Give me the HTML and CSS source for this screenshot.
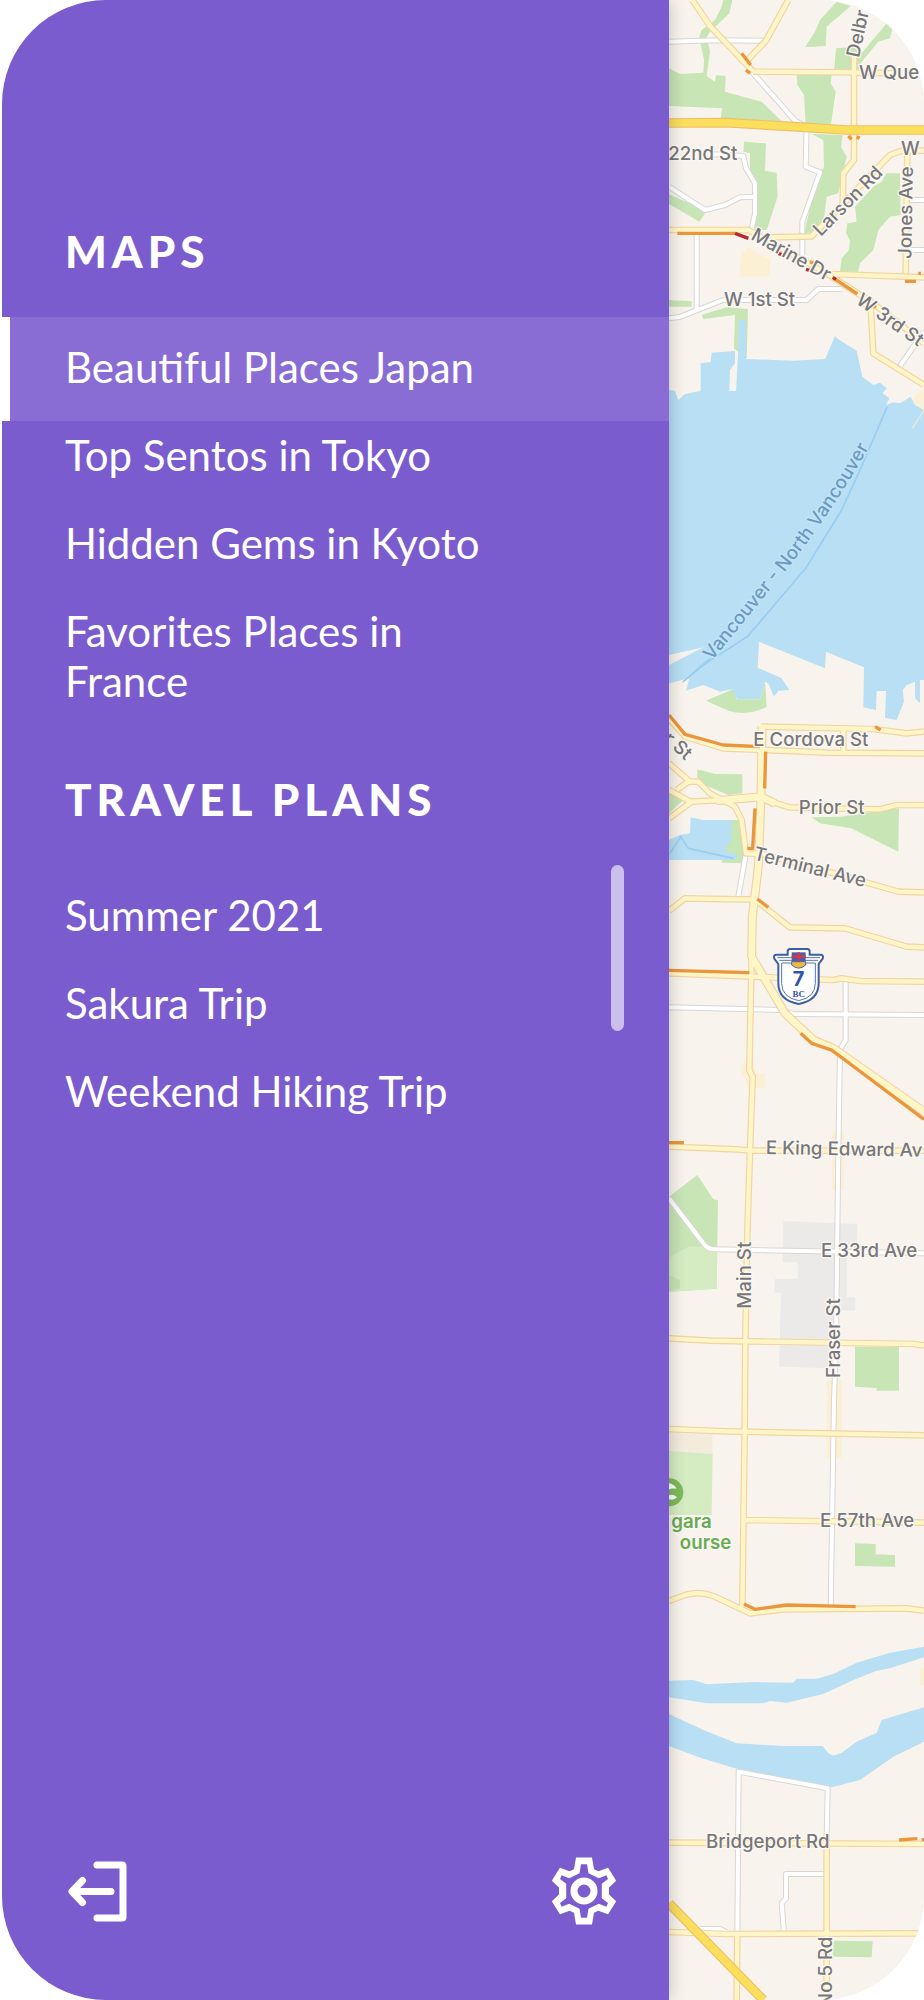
FILE: index.html
```html
<!DOCTYPE html>
<html lang="en">
<head>
<meta charset="utf-8">
<meta name="viewport" content="width=device-width, initial-scale=1">
<title>Travel maps</title>
<link rel="stylesheet" href="styles.css">
</head>
<body>
<div class="app">
  <aside class="sidebar">
    <nav class="menu">
      <section class="menu-section">
        <h2 class="menu-title">MAPS</h2>
        <ul class="menu-list">
          <li><a class="menu-link active" href="#japan" aria-current="page">Beautiful Places Japan</a></li>
          <li><a class="menu-link" href="#tokyo">Top Sentos in Tokyo</a></li>
          <li><a class="menu-link" href="#kyoto">Hidden Gems in Kyoto</a></li>
          <li><a class="menu-link" href="#france">Favorites Places in France</a></li>
        </ul>
      </section>
      <section class="menu-section">
        <h2 class="menu-title">TRAVEL PLANS</h2>
        <div class="scroll-area">
          <ul class="menu-list spaced">
            <li><a class="menu-link" href="#summer">Summer 2021</a></li>
            <li><a class="menu-link" href="#sakura">Sakura Trip</a></li>
            <li><a class="menu-link" href="#hiking">Weekend Hiking Trip</a></li>
          </ul>
          <span class="scroll-thumb"></span>
        </div>
      </section>
    </nav>
    <footer class="actions">
      <button class="icon-button" type="button" aria-label="Log out">
        <svg class="icon" viewBox="-2 -5 68 68" aria-hidden="true">
          <path class="icon-line" d="M29 3H54Q55 3 55 4V55Q55 56 54 56H29M43 29.500H5M14.500 18.500L4 29.500L14.500 40.500"/>
        </svg>
      </button>
      <button class="icon-button" type="button" aria-label="Settings">
        <svg class="icon" viewBox="-34 -34 68 68" aria-hidden="true">
          <path class="icon-solid" d="M-8-33.500H8L10-21.700L14.400-19.700L24.100-23.300L32.200-10.200L25-3.600V3.600L32.200 10.200L24.100 23.300L14.400 19.700L10 21.700L8 33.500H-8L-10 21.700L-14.400 19.700L-24.100 23.300L-32.200 10.200L-25 3.600V-3.600L-32.200-10.200L-24.100-23.300L-14.400-19.700L-10-21.700ZM-3-26.700L-4.500-17.700L-14.800-12.800L-22.400-15.700L-24-12L-17.800-7.300V7.300L-24 12L-22.400 15.700L-14.800 12.800L-4.500 17.700L-3 26.700H3L4.500 17.700L14.800 12.800L22.400 15.700L24 12L17.800 7.300V-7.300L24-12L22.400-15.700L14.800-12.800L4.500-17.700L3-26.700Z"/>
          <circle class="icon-line" r="10"/>
        </svg>
      </button>
    </footer>
  </aside>

  <main class="map">
    <svg class="map-canvas" viewBox="27 0 765 6000" preserveAspectRatio="xMinYMin slice" role="img" aria-label="Map of Vancouver">
      <defs>
        <path id="streets" d="M27 125L170 121L315 122M275 215L405 362L440 380L437 500L480 517L427 665V765M150 462L250 468L258 505L285 550V640L272 700M27 560L135 630L195 615L240 592L282 590M110 705V935M27 955L55 952L190 900H440L475 867H545M792 995L715 1105M745 600H792M740 750H792M258 2560L235 2690M27 3022L360 3030L400 3042L792 3045M557 2940V3120L540 3150L535 3450L528 4030L522 4200L512 4830M27 3595L130 3730Q142 3748 165 3748L792 3760M232 5800L236 5315L503 5365L500 5510M372 5800L365 5710L378 5695V5622H498M120 5787H180L200 5797"/>
        <path id="avenues" d="M97 0L150 78L280 215M385 0L318 122L258 185M280 215L582 217L700 220M582 165V480L550 520L548 625M330 712L455 709L690 465L725 452H792M742 460L737 820M27 690H265L500 820L640 910L792 1030M515 822L792 832M632 920L640 1060L792 1155M792 2260L500 2258L190 2245L75 2210L27 2155M303 2180L640 2187L740 2200L792 2195M550 2190V2255M27 2370L90 2405L300 2395L390 2422L660 2428L710 2415H792M27 2290L90 2345H115L150 2380L225 2420L245 2460L258 2560L310 2562L540 2625L715 2675L792 2677M27 2455L95 2405M50 2370L85 2345M27 2732L75 2695L235 2698H285L390 2782L555 2785L740 2840L792 2842M27 2920L280 2930L520 2940L545 2935L600 2943L792 2945M27 3440L230 3448L270 3452H792M275 2860L268 3210L278 3230L270 3450L262 3700L256 4020L254 4290L247 4820M27 4015L150 4022L760 4032L792 4036M27 4287L200 4294L792 4306M255 4560L792 4568M27 4803L75 4785Q120 4772 160 4788L270 4840L370 4828L740 4825L792 4832M27 5528L792 5532M500 5505V6000M27 5796L200 5802L792 5800M232 5800L230 6000"/>
        <path id="arterials" d="M306 2180L303 2390L295 2600L283 2700L277 2750L275 2870L375 3040L460 3120L520 3145L792 3335M170 2402L303 2390L345 2410"/>
        <path id="highways" d="M27 369L200 368L400 380L560 390H792M27 5710L310 6000"/>
        <path id="ferry-label" d="M155 1984L385 1702Q560 1480 690 1225"/>
      </defs>

      <rect class="land" x="27" y="0" width="765" height="6000"/>

      <g class="sand">
        <path d="M245 760L265 740L330 780L328 830H238Z"/>
        <path d="M792 1170L765 1185L760 1205L792 1230Z"/>
        <path d="M245 3190H285V3220H315V3265H265L255 3232H245ZM515 3395H550V3570H515ZM500 4140H545V4375H500ZM780 5005H792V5055H780Z"/>
      </g>
      <path class="tan" d="M27 4295L157 4300V4362L27 4357Z"/>
      <path class="grey" d="M370 3663L592 3672L590 3758H560V3892H586V3932L520 3930L510 4105L357 4100L363 3878H343L345 3836H413V3787H368Z"/>
      <g class="park">
        <path d="M27 205L60 222L130 218L132 180L118 110L125 90L165 60L185 20L190 0H217L208 40L150 95L140 110L150 155L140 228L165 245L168 226L197 228L195 275L305 305L370 368L182 355L187 325L27 318Z"/>
        <path d="M530 5L572 18L500 80L497 138L435 142L465 95L480 60Z"/>
        <path d="M680 70L697 85L690 115L655 125L605 185L600 210H522L528 145L585 140L605 160Z"/>
        <path d="M410 225H515L512 250L527 275L512 380L437 375L432 285L412 255Z"/>
        <path d="M455 402L548 405L543 440L560 470L535 580L500 590L487 695L432 700L450 625L470 545L492 500L490 420Z"/>
        <path d="M252 425L318 430L315 512L350 518L353 590L320 690H285L290 545L270 515V460L250 455Z"/>
        <path d="M27 583L140 632L118 665L27 612Z"/>
        <path d="M680 520H720L722 645L690 650L655 690L640 750L600 790L594 815H540L545 775L567 750L570 720L558 700L562 670L590 665L585 620L640 560L665 545Z"/>
        <path d="M27 900L95 904V920H27ZM125 945L200 922L264 927L260 1075L222 1045L225 945L130 957Z"/>
        <path d="M138 2102L220 2067L230 2098H300L315 2045L320 2120Q265 2150 205 2132Z"/>
        <path d="M112 2308L165 2322L247 2323V2380L205 2385L112 2345ZM27 2380L70 2400L27 2440ZM212 2460H245L250 2590L185 2588L200 2530ZM455 2452L540 2450L717 2425L715 2555L573 2485L480 2470Z"/>
        <path d="M27 3590L112 3525L160 3598L174 3600L170 3866L27 3875Z"/>
        <path d="M585 4040H717V4172H650V4164L585 4160ZM585 4630L647 4632V4663L705 4665V4700L585 4698ZM522 5822L638 5824L635 5872L517 5870Z"/>
      </g>
      <g class="park-light">
        <path d="M27 3772L85 3740H172L170 3866L27 3875Z"/>
        <path d="M27 4353L158 4362L155 4545H27Z"/>
      </g>
      <path class="park" d="M27 3825L60 3840V3866L27 3872Z"/>

      <g class="water">
        <path d="M27 1170L45 1172L55 1200L75 1182L122 1173V1090L152 1086L155 1058L225 1053V1090L210 1110L208 1172L228 1173L235 1050L236 960H257L258 1077L400 1082L495 1077L525 1008L535 1018L590 1052L607 1130L640 1155L660 1148L680 1165L668 1180L688 1195L678 1215L700 1207L720 1210L752 1190L765 1215L792 1230V2040H780V2110L765 2095V2045L740 2055L728 2070L732 2105L710 2160L675 2153L678 2073H650L648 2130L610 2122L612 2002L498 1955L495 2005L297 1925L293 2003L365 2035L388 2070L355 2072L342 2090L325 2050L315 2045L300 2098H232L215 2068L180 2075L130 2055L78 2072L88 2035L27 2050V1995L130 1942L27 1965Z"/>
        <path d="M92 2452L130 2460H215L212 2525L197 2540L200 2555L230 2562L225 2580L27 2580V2520L60 2505L90 2500Z"/>
        <path d="M27 5042L100 5040L140 5053L280 5046L400 5048L410 5036H470L520 5022L590 4988L690 4958L792 4940V4972L690 5005L650 5012L580 5040L490 5082L380 5108L330 5103L310 5110H140L27 5092Z"/>
        <path d="M27 5142L130 5190L230 5230L370 5238H488L505 5260L520 5267L545 5258L590 5225L650 5198L665 5160L792 5122V5225L700 5270L600 5340L515 5362L225 5305L125 5275L27 5238Z"/>
      </g>
      <path class="ferry" d="M682 1220L600 1410L545 1530L437 1705L262 1910L130 1995L70 2045L150 1975M30 2560L62 2510L85 2545L220 2575"/>
      <path class="pier" d="M792 1230L757 1285"/>

      <use class="street-edge" href="#streets"/>
      <use class="street" href="#streets"/>
      <use class="arterial-edge" href="#arterials"/>
      <use class="avenue-edge" href="#avenues"/>
      <use class="arterial" href="#arterials"/>
      <use class="avenue" href="#avenues"/>
      <use class="highway-edge" href="#highways"/>
      <use class="highway" href="#highways"/>
      <path class="traffic" d="M52 700H225M522 835L592 882M635 912L648 922M245 160L272 195M258 210L270 220M450 785L465 792M565 408L575 418M592 418L597 408M27 2145L75 2203L190 2235L300 2240M317 2255L314 2365M285 2425L278 2545H262M292 2697L325 2722M645 2180L662 2190M27 2911L268 2918M422 3100L455 3130L515 3150L792 3358M27 3428H72M735 844H768M775 820H783M252 4812L285 4828L380 4815L587 4820M717 5520L772 5516M785 5519H792"/>
      <path class="traffic jam" d="M225 700L265 715M355 760L365 764M438 808L452 812M518 832L528 838"/>

      <g class="label">
        <text transform="translate(597 175) rotate(-78)">Delbr</text>
        <text x="597" y="236">W Que</text>
        <text class="end" x="232" y="481">22nd St</text>
        <text x="723" y="464">W</text>
        <text transform="translate(482 711) rotate(-45)">Larson Rd</text>
        <text transform="translate(754 777) rotate(-89)">Jones Ave</text>
        <text transform="translate(270 716) rotate(29)">Marine Dr</text>
        <text transform="translate(585 908) rotate(35)">W 3rd St</text>
        <text x="192" y="918">W 1st St</text>
        <text class="end" transform="translate(76 2282) rotate(42)">r St</text>
        <text x="280" y="2237">E Cordova St</text>
        <text x="416" y="2442">Prior St</text>
        <text transform="translate(278 2578) rotate(14)">Terminal Ave</text>
        <text transform="translate(317 3462) rotate(1)">E King Edward Av</text>
        <text x="483" y="3772">E 33rd Ave</text>
        <text transform="translate(273 3926) rotate(-90)">Main St</text>
        <text transform="translate(541 4134) rotate(-90)">Fraser St</text>
        <text x="480" y="4582">E 57th Ave</text>
        <text x="138" y="5543">Bridgeport Rd</text>
        <text class="end" transform="translate(516 5810) rotate(-90)">No 5 Rd</text>
      </g>
      <text class="label sea"><textPath href="#ferry-label">Vancouver - North Vancouver</textPath></text>

      <g>
        <circle class="golf" cx="28" cy="4477" r="42"/>
        <path class="golf-mark" d="M27 4450Q42 4452 50 4466Q36 4464 27 4468ZM27 4486Q42 4480 51 4492Q42 4502 27 4498Z"/>
        <text class="label golf-label end" x="155" y="4585">gara</text>
        <text class="label golf-label end" x="214" y="4648">ourse</text>
      </g>

      <g class="shield">
        <path class="shield-edge" d="M390 2847H442Q449 2847 449 2855V2864H481Q492 2864 488 2876L476 2892V2950Q476 3001 416 3012Q355 3001 355 2950V2892L343 2876Q339 2864 350 2864H383V2855Q383 2847 390 2847Z"/>
        <path class="shield-line" d="M352 2873H480M358 2881H474M366 2889H466V2950Q466 2992 416 3002Q365 2992 365 2950V2889"/>
        <path class="shield-flag" d="M395 2857H437V2885H395Z"/>
        <path class="shield-cross" d="M395 2870H437M416 2857V2885"/>
        <path class="shield-sun" d="M395 2885H437V2895Q416 2914 395 2895Z"/>
        <text class="shield-number" x="416" y="2959">7</text>
        <text class="shield-region" x="416" y="2990">BC</text>
      </g>
    </svg>
  </main>
</div>
</body>
</html>
```
FILE: styles.css
```css
* {
  box-sizing: border-box;
}

body {
  margin: 0;
  background: #fff;
  font-family: Lato, "Open Sans", sans-serif;
}

.app {
  display: grid;
  grid-template-columns: minmax(0, 667fr) minmax(0, 255fr);
  min-height: 100vh;
  margin-left: 2px;
  border-radius: 104px;
  overflow: hidden;
}

.sidebar {
  position: relative;
  z-index: 1;
  display: flex;
  flex-direction: column;
  padding: 225px 0 75px;
  background: #7b5ccf;
  box-shadow: 0 0 16px rgba(0, 0, 0, 0.24);
  color: #fff;
}

.menu-section + .menu-section {
  margin-top: 38px;
}

.menu-title {
  margin: 0 0 40px;
  padding: 0 63px;
  font-size: 44px;
  font-weight: 900;
  line-height: 52px;
  letter-spacing: 5px;
}

.menu-list {
  margin: 0;
  padding: 0;
  list-style: none;
}

.menu-list.spaced {
  padding-top: 16px;
}

.menu-link {
  display: block;
  padding: 9px 160px 29px 63px;
  color: inherit;
  font-size: 42px;
  line-height: 50px;
  text-decoration: none;
}

.menu-link.active {
  padding-top: 25px;
  padding-left: 55px;
  border-left: 8px solid #fff;
  background: #896dd5;
}

.scroll-area {
  position: relative;
}

.scroll-thumb {
  position: absolute;
  top: 0;
  right: 45px;
  width: 13px;
  height: 166px;
  border-radius: 7px;
  background: #cdbfec;
}

.actions {
  display: flex;
  justify-content: space-between;
  margin-top: auto;
  padding: 0 51px 0 64px;
}

.icon-button {
  padding: 0;
  border: 0;
  background: none;
  color: inherit;
  cursor: pointer;
}

.icon {
  display: block;
  width: 68px;
  height: 68px;
}

.icon-line {
  fill: none;
  stroke: currentColor;
  stroke-width: 7;
  stroke-linecap: round;
  stroke-linejoin: round;
}

.icon-solid {
  fill: currentColor;
  fill-rule: evenodd;
}

.map {
  background: #f8f4ed;
}

.map-canvas {
  display: block;
  width: 100%;
  height: 100%;
}

.land { fill: #f8f4ed; }
.sand { fill: #fbf0d3; }
.tan { fill: #f3ecdd; }
.grey { fill: #ebeae8; }
.park { fill: #c8e5b6; }
.park-light { fill: #d5ecc3; }
.water { fill: #b8dff4; }

.ferry,
.pier,
.street,
.street-edge,
.avenue,
.avenue-edge,
.arterial,
.arterial-edge,
.highway,
.highway-edge,
.traffic {
  fill: none;
  stroke-linejoin: round;
}

.ferry { stroke: #9bcdf0; stroke-width: 5; }
.pier { stroke: #dfe9dc; stroke-width: 5; }
.street-edge { stroke: #d9d6d4; stroke-width: 18; }
.street { stroke: #fff; stroke-width: 12; }
.avenue-edge { stroke: #f1d3a4; stroke-width: 20; }
.avenue { stroke: #fff6c8; stroke-width: 13; }
.arterial-edge { stroke: #f1d3a4; stroke-width: 27; }
.arterial { stroke: #fff6c8; stroke-width: 20; }
.highway-edge { stroke: #efbf68; stroke-width: 29; }
.highway { stroke: #fbdf5c; stroke-width: 22; }
.traffic { stroke: #ea963c; stroke-width: 10; }
.jam { stroke: #b8292b; }

.label {
  fill: #77777a;
  stroke: #fbf8f3;
  stroke-width: 8;
  stroke-linejoin: round;
  paint-order: stroke;
  font-family: Inter, Roboto, sans-serif;
  font-size: 56px;
  font-weight: 500;
}

.end { text-anchor: end; }

.sea {
  fill: #6b9bc5;
  stroke: #c4e4f6;
}

.golf { fill: #7dbb5a; }
.golf-mark { fill: #fff; }

.golf-label {
  fill: #68aa55;
  font-weight: 600;
}

.shield-edge { fill: #fff; stroke: #3c5ea8; stroke-width: 6; }
.shield-line { fill: none; stroke: #5574b4; stroke-width: 3; }
.shield-flag { fill: #4b5fa8; }
.shield-cross { fill: none; stroke: #d8364a; stroke-width: 7; }
.shield-sun { fill: #f0b83c; stroke: #4967ac; stroke-width: 3; }

.shield-number,
.shield-region {
  fill: #2f55a8;
  text-anchor: middle;
  font-family: Inter, Roboto, sans-serif;
  font-size: 60px;
  font-weight: 700;
}

.shield-region {
  font-family: "Liberation Serif", serif;
  font-size: 27px;
}
```
